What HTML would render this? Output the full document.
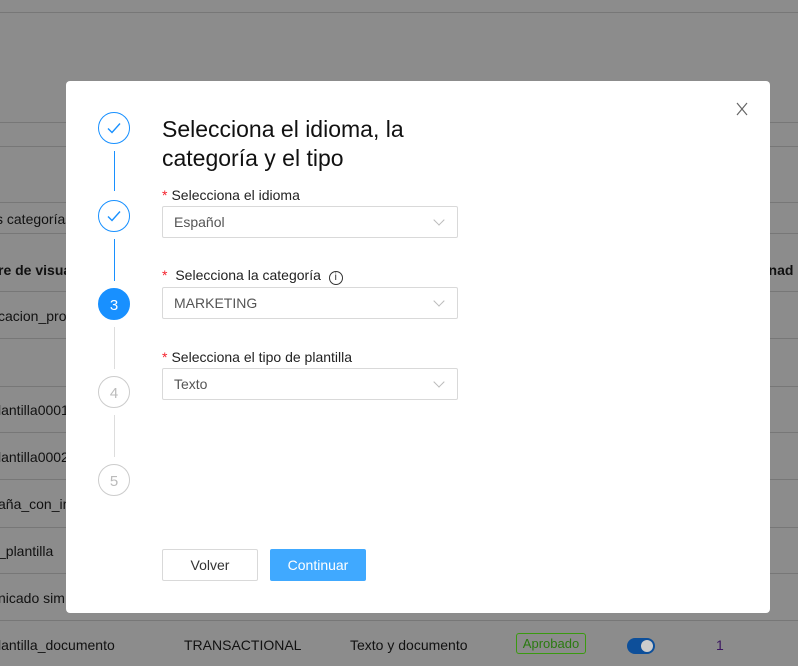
<!DOCTYPE html>
<html><head><meta charset="utf-8"><style>
*{box-sizing:border-box;margin:0;padding:0}
body{width:798px;height:666px;overflow:hidden;background:#8c8c8c;font-family:"Liberation Sans",sans-serif;position:relative;color:#1a1a1a}
.hl{position:absolute;left:0;width:798px;height:1px;background:#777}
.bt{position:absolute;font-size:14px;color:#111}
.modal{position:absolute;left:66px;top:81px;width:704px;height:532px;background:#fff;border-radius:4px}
.st{position:absolute;left:32px;width:32px;height:32px;border-radius:50%;border:1px solid #1890ff;display:flex;align-items:center;justify-content:center;font-size:15px;padding-top:2px}
.ln{position:absolute;left:47.5px;width:1px}
.lab{position:absolute;left:96px;font-size:14px;color:#222}
.lab b{color:#f5222d;font-weight:normal;margin-right:4px}
.sel{position:absolute;left:96px;width:296px;height:32px;border:1px solid #d9d9d9;border-radius:2px;font-size:14px;color:#555;padding-left:11px;line-height:30px}
.sel:after{content:"";position:absolute;right:14px;top:9px;width:7px;height:7px;border-right:1px solid #bbb;border-bottom:1px solid #bbb;transform:rotate(45deg)}
.btn{position:absolute;top:468px;height:32px;border-radius:2px;font-size:14px;text-align:center;line-height:30px}
</style></head><body>
<div class="hl" style="top:12px"></div>
<div class="hl" style="top:122px"></div>
<div class="hl" style="top:146px"></div>
<div class="hl" style="top:202px"></div>
<div class="hl" style="top:233px"></div>
<div class="hl" style="top:291px"></div>
<div class="hl" style="top:338px"></div>
<div class="hl" style="top:386px"></div>
<div class="hl" style="top:432px"></div>
<div class="hl" style="top:479px"></div>
<div class="hl" style="top:527px"></div>
<div class="hl" style="top:573px"></div>
<div class="hl" style="top:620px"></div>
<div class="bt" style="left:-4px;top:211px">s categorías</div>
<div class="bt" style="left:-2px;top:262px;font-weight:bold">re de visua</div>
<div class="bt" style="left:-2px;top:308px">cacion_proc</div>
<div class="bt" style="left:-2px;top:402px">lantilla0001</div>
<div class="bt" style="left:-2px;top:449px">lantilla0002</div>
<div class="bt" style="left:-2px;top:496px">aña_con_im</div>
<div class="bt" style="left:-2px;top:543px">_plantilla</div>
<div class="bt" style="left:-2px;top:590px">nicado sim</div>
<div class="bt" style="left:-2px;top:637px">lantilla_documento</div>
<div class="bt" style="left:184px;top:637px">TRANSACTIONAL</div>
<div class="bt" style="left:350px;top:637px">Texto y documento</div>
<div style="position:absolute;left:516px;top:633px;width:70px;height:21px;border:1px solid #3a9a10;border-radius:3px;color:#2a7a10;font-size:13px;text-align:center;line-height:19px">Aprobado</div>
<div style="position:absolute;left:627px;top:638px;width:28px;height:16px;border-radius:8px;background:#0d4f9a"><div style="position:absolute;right:2px;top:2px;width:12px;height:12px;border-radius:50%;background:#ccc"></div></div>
<div class="bt" style="left:716px;top:637px;color:#3a1560">1</div>
<div class="bt" style="left:760px;top:262px;font-weight:bold">gnad</div>

<div class="modal">
<svg style="position:absolute;right:22px;top:21px" width="12" height="14" viewBox="0 0 12 14"><path d="M1 1l10 12M11 1L1 13" stroke="#666" stroke-width="1.2" fill="none"/></svg>
<div class="ln" style="top:70px;height:40px;background:#1890ff"></div>
<div class="ln" style="top:158px;height:42px;background:#1890ff"></div>
<div class="ln" style="top:246px;height:42px;background:#ddd"></div>
<div class="ln" style="top:334px;height:42px;background:#ddd"></div>
<div class="st" style="top:31px;padding:0"><svg width="16" height="16" viewBox="0 0 16 16"><path d="M2 8.5l4 4 8-9" fill="none" stroke="#1890ff" stroke-width="1.4"/></svg></div>
<div class="st" style="top:119px;padding:0"><svg width="16" height="16" viewBox="0 0 16 16"><path d="M2 8.5l4 4 8-9" fill="none" stroke="#1890ff" stroke-width="1.4"/></svg></div>
<div class="st" style="top:207px;background:#1890ff;color:#fff">3</div>
<div class="st" style="top:295px;border-color:#ccc;color:#bbb">4</div>
<div class="st" style="top:383px;border-color:#ccc;color:#bbb">5</div>
<div style="position:absolute;left:96px;top:34px;font-size:23px;line-height:29px;color:#111;width:300px">Selecciona el idioma, la categoría y el tipo</div>
<div class="lab" style="top:106px"><b>*</b>Selecciona el idioma</div>
<div class="sel" style="top:125px">Español</div>
<div class="lab" style="top:186px"><b>*</b> Selecciona la categoría <span style="display:inline-block;width:14px;height:14px;border:1px solid #333;border-radius:50%;font-size:10px;text-align:center;line-height:12px;margin-left:4px;vertical-align:0px">i</span></div>
<div class="sel" style="top:206px">MARKETING</div>
<div class="lab" style="top:268px"><b>*</b>Selecciona el tipo de plantilla</div>
<div class="sel" style="top:287px">Texto</div>
<div class="btn" style="left:96px;width:96px;border:1px solid #d9d9d9;color:#333">Volver</div>
<div class="btn" style="left:204px;width:96px;background:#40a9ff;color:#fff;border:1px solid #40a9ff">Continuar</div>
</div>
</body></html>
